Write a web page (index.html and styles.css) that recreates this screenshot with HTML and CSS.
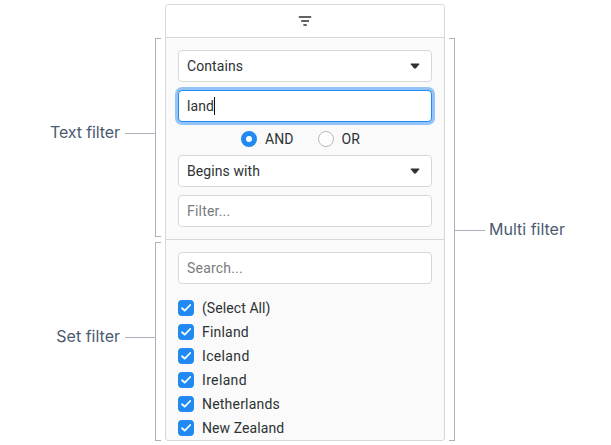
FILE: index.html
```html
<!DOCTYPE html>
<html lang="en">
<head>
<meta charset="utf-8">
<title>Multi filter</title>
<link rel="stylesheet" href="styles.css">
</head>
<body>
<main class="diagram">
  <div class="notes notes-left">
    <section class="note note-text"><span class="label">Text filter</span><i class="lead"></i><i class="bracket"></i></section>
    <section class="note note-set"><span class="label">Set filter</span><i class="lead"></i><i class="bracket"></i></section>
  </div>
  <div class="panel">
    <header class="tab">
      <svg width="16" height="16" viewBox="0 0 16 16"><path d="M1.8 4h12.4M4.2 8h7.8M6.4 12h3.4" fill="none" stroke="#2d3234" stroke-width="1.5"/></svg>
    </header>
    <section class="text-filter">
      <div class="field select"><span class="snug">Contains</span><svg width="10" height="6" viewBox="0 0 10 6"><path d="M.8.5h8.4v.8L5.9 5.6H4.1L.8 1.3z" fill="#2d3234"/></svg></div>
      <div class="field focused"><span class="snug">land</span><i class="caret"></i></div>
      <div class="joins">
        <span class="radio checked"></span><span class="snug">AND</span>
        <span class="radio second"></span><span class="snug">OR</span>
      </div>
      <div class="field select"><span class="snug">Begins with</span><svg width="10" height="6" viewBox="0 0 10 6"><path d="M.8.5h8.4v.8L5.9 5.6H4.1L.8 1.3z" fill="#2d3234"/></svg></div>
      <div class="field hint"><span>Filter...</span></div>
    </section>
    <section class="set-filter">
      <div class="field hint"><span>Search...</span></div>
      <ul class="items">
        <li><svg class="check" viewBox="0 0 16 16"><path d="M4 8.1l2.7 2.6L12.2 5"/></svg><span class="snug">(Select All)</span></li>
        <li><svg class="check" viewBox="0 0 16 16"><path d="M4 8.1l2.7 2.6L12.2 5"/></svg><span>Finland</span></li>
        <li><svg class="check" viewBox="0 0 16 16"><path d="M4 8.1l2.7 2.6L12.2 5"/></svg><span class="wide">Iceland</span></li>
        <li><svg class="check" viewBox="0 0 16 16"><path d="M4 8.1l2.7 2.6L12.2 5"/></svg><span class="wide">Ireland</span></li>
        <li><svg class="check" viewBox="0 0 16 16"><path d="M4 8.1l2.7 2.6L12.2 5"/></svg><span>Netherlands</span></li>
        <li><svg class="check" viewBox="0 0 16 16"><path d="M4 8.1l2.7 2.6L12.2 5"/></svg><span class="snug">New Zealand</span></li>
      </ul>
    </section>
  </div>
  <div class="notes notes-right">
    <section class="note note-multi"><i class="bracket right"></i><i class="lead"></i><span class="label">Multi filter</span></section>
  </div>
</main>
</body>
</html>
```

FILE: styles.css
```css
* { box-sizing: border-box; }
body {
  margin: 0;
  background: #fff;
  color: #2d3234;
  font: 14px/20px Roboto, "Noto Sans", sans-serif;
  letter-spacing: 0.2px;
  overflow: hidden;
}
.snug { letter-spacing: 0.08px; }
.wide { letter-spacing: 0.35px; }
.diagram { display: grid; grid-template-columns: 165px 280px 1fr; height: 445px; padding-top: 4px; }
.notes { padding-top: 34px; }
.notes-left { display: flex; flex-direction: column; gap: 5px; }
.note { display: flex; height: 199px; }
.notes-left .note { justify-content: flex-end; padding-right: 4px; }
.note-multi { height: 403px; padding-left: 4px; }
.label { font: 16px/20px Inter, sans-serif; color: #4b5a70; letter-spacing: 0; white-space: nowrap; }
.lead { width: 30px; height: 1px; background: #aab1bd; }
.bracket { width: 6px; border: 1px solid #aab1bd; border-right: 0; }
.bracket.right { border-left: 0; border-right: 1px solid #aab1bd; }
.notes-left .label { margin: 84px 5px 0 0; }
.note-text .label { letter-spacing: -0.1px; }
.notes-left .lead { margin-top: 95px; }
.note-multi .label { margin: 181px 0 0 4px; }
.note-multi .lead { margin-top: 192px; }

.panel { height: 437px; border: 1px solid #d6d8d9; border-radius: 3px; background: #fafafa; overflow: hidden; }
.tab { display: flex; align-items: center; justify-content: center; height: 33px; background: #fff; border-bottom: 1px solid #d6d8d9; }
.text-filter { height: 202px; padding: 12px; border-bottom: 1px solid #d6d8d9; }
.set-filter { padding: 12px; }
.field { display: flex; align-items: center; height: 32px; padding: 0 8px; background: #fff; border: 1px solid #d6d8d9; border-radius: 4px; }
.field + .field { margin-top: 8px; }
.select { justify-content: space-between; padding-right: 11px; }
.focused { border-color: #2089f2; box-shadow: 0 0 0 3px #94c5f8; }
.caret { width: 1px; height: 18px; background: #111; }
.hint { color: #797c7e; }
.joins { display: flex; align-items: center; height: 33px; padding-left: 63px; }
.radio { width: 16px; height: 16px; margin-right: 8px; border: 1px solid #b8babb; border-radius: 50%; background: #fff; }
.radio.checked { border: 5px solid #2089f2; }
.radio.second { margin-left: 24px; }
.items { list-style: none; margin: 12px 0 0; padding: 0; }
.items li { display: flex; align-items: center; gap: 8px; height: 24px; }
.check { width: 16px; height: 16px; border-radius: 4px; background: #2089f2; }
.check path { fill: none; stroke: #fff; stroke-width: 1.8; stroke-linecap: round; stroke-linejoin: round; }
```
